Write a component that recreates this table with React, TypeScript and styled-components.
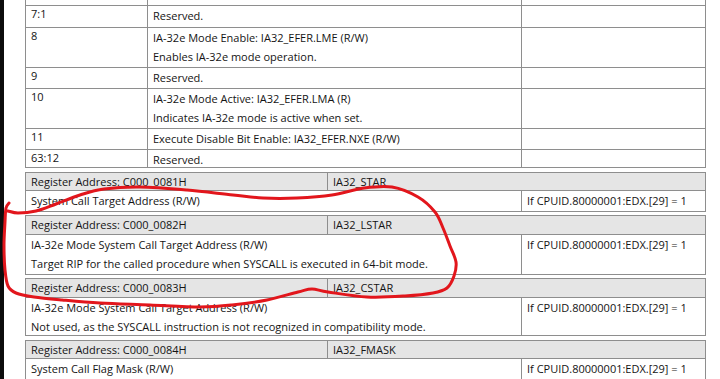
import React from "react";
import styled, { createGlobalStyle } from "styled-components";

const GlobalStyle = createGlobalStyle`
  html, body {
    margin: 0;
    padding: 0;
    background: #fff;
  }
  body {
    width: 720px;
    height: 379px;
    overflow: hidden;
    font-family: "Open Sans", "Noto Sans", sans-serif;
    font-size: 11px;
    color: #141414;
  }
`;

type BitRow = { bit: string; lines: string[]; h: number };

const bitRows: BitRow[] = [
  { bit: "", lines: [], h: 5 },
  { bit: "7:1", lines: ["Reserved."], h: 21 },
  {
    bit: "8",
    lines: ["IA-32e Mode Enable: IA32_EFER.LME (R/W)", "Enables IA-32e mode operation."],
    h: 39,
  },
  { bit: "9", lines: ["Reserved."], h: 20 },
  {
    bit: "10",
    lines: ["IA-32e Mode Active: IA32_EFER.LMA (R)", "Indicates IA-32e mode is active when set."],
    h: 39,
  },
  { bit: "11", lines: ["Execute Disable Bit Enable: IA32_EFER.NXE (R/W)"], h: 20 },
  { bit: "63:12", lines: ["Reserved."], h: 17 },
];

type Register = {
  address: string;
  name: string;
  lines: string[];
  note: string;
  mt: number;
  headH: number;
  bodyH: number;
};

const cpuid = "If CPUID.80000001:EDX.[29] = 1";

const registers: Register[] = [
  {
    address: "C000_0081H",
    name: "IA32_STAR",
    lines: ["System Call Target Address (R/W)"],
    note: cpuid,
    mt: 4,
    headH: 17,
    bodyH: 19,
  },
  {
    address: "C000_0082H",
    name: "IA32_LSTAR",
    lines: [
      "IA-32e Mode System Call Target Address (R/W)",
      "Target RIP for the called procedure when SYSCALL is executed in 64-bit mode.",
    ],
    note: cpuid,
    mt: 3,
    headH: 18,
    bodyH: 38,
  },
  {
    address: "C000_0083H",
    name: "IA32_CSTAR",
    lines: [
      "IA-32e Mode System Call Target Address (R/W)",
      "Not used, as the SYSCALL instruction is not recognized in compatibility mode.",
    ],
    note: cpuid,
    mt: 3,
    headH: 18,
    bodyH: 36,
  },
  {
    address: "C000_0084H",
    name: "IA32_FMASK",
    lines: ["System Call Flag Mask (R/W)"],
    note: cpuid,
    mt: 4,
    headH: 17,
    bodyH: 19,
  },
];

// hand-drawn red loop, points traced from the markup
const loop: [number, number][] = [
  [9, 203], [6, 208], [5, 222], [4, 245], [5, 270], [8, 286], [16, 293],
  [34, 297], [62, 300], [100, 303], [150, 305], [200, 307], [232, 305],
  [267, 300], [298, 292], [312, 289], [328, 292], [367, 297], [405, 296],
  [433, 293], [447, 288], [454, 276], [456, 262], [450, 246], [443, 228],
  [435, 212], [418, 197], [392, 187], [364, 188], [332, 195], [297, 198],
  [263, 198], [233, 195], [187, 190], [140, 187], [104, 189], [80, 195],
  [56, 204], [36, 211], [18, 213], [8, 211],
];

function smoothPath(pts: [number, number][]) {
  let d = `M${pts[0][0]},${pts[0][1]}`;
  for (let i = 0; i < pts.length - 1; i++) {
    const p0 = pts[i - 1] || pts[i];
    const p1 = pts[i];
    const p2 = pts[i + 1];
    const p3 = pts[i + 2] || p2;
    const c1x = p1[0] + (p2[0] - p0[0]) / 6;
    const c1y = p1[1] + (p2[1] - p0[1]) / 6;
    const c2x = p2[0] - (p3[0] - p1[0]) / 6;
    const c2y = p2[1] - (p3[1] - p1[1]) / 6;
    d += ` C${c1x.toFixed(1)},${c1y.toFixed(1)} ${c2x.toFixed(1)},${c2y.toFixed(1)} ${p2[0]},${p2[1]}`;
  }
  return d;
}

export default function App() {
  return (
    <>
      <GlobalStyle />
      <Page>
        <Strip />
        <Main>
          <BitsTable>
            {bitRows.map((r, i) => (
              <BitsRow key={i} $h={r.h}>
                <Cell>{r.bit}</Cell>
                <Cell $divided>
                  {r.lines.map((l) => (
                    <Line key={l}>{l}</Line>
                  ))}
                </Cell>
                <Cell $divided />
              </BitsRow>
            ))}
          </BitsTable>
          {registers.map((r) => (
            <RegBlock key={r.address} $mt={r.mt}>
              <RegHead $h={r.headH}>
                <Cell>Register Address: {r.address}</Cell>
                <Cell $divided>{r.name}</Cell>
              </RegHead>
              <RegBody $h={r.bodyH}>
                <Cell>
                  {r.lines.map((l) => (
                    <Line key={l}>{l}</Line>
                  ))}
                </Cell>
                <Cell $divided>
                  <Line>{r.note}</Line>
                </Cell>
              </RegBody>
            </RegBlock>
          ))}
          <NextBlock />
        </Main>
        <Markup viewBox="0 0 720 379" width="720" height="379">
          <path
            d={smoothPath(loop)}
            fill="none"
            stroke="#e2161c"
            strokeWidth={3}
            strokeLinecap="round"
            strokeLinejoin="round"
          />
        </Markup>
      </Page>
    </>
  );
}

const Page = styled.div`
  position: relative;
  display: flex;
  width: 720px;
  height: 379px;
  overflow: hidden;
`;

const Strip = styled.div`
  flex: 0 0 4px;
  background: #0c0c0c;
`;

const Main = styled.div`
  padding-left: 21px;
  display: flex;
  flex-direction: column;
`;

const BitsTable = styled.div`
  width: 681px;
  box-sizing: border-box;
  border-left: 1px solid #8e8e8e;
  border-right: 1px solid #8e8e8e;
`;

const BitsRow = styled.div<{ $h: number }>`
  display: grid;
  grid-template-columns: 121px 374px 1fr;
  height: ${(p) => p.$h}px;
  border-bottom: 1px solid #8e8e8e;
`;

const Cell = styled.div<{ $divided?: boolean }>`
  box-sizing: border-box;
  padding: 0 5px;
  overflow: hidden;
  white-space: nowrap;
  ${(p) => (p.$divided ? "border-left: 1px solid #8e8e8e;" : "")}
`;

const Line = styled.div`
  line-height: 19px;
`;

const RegBlock = styled.div<{ $mt: number }>`
  margin-top: ${(p) => p.$mt}px;
  width: 681px;
  box-sizing: border-box;
  border: 1px solid #8e8e8e;
  border-bottom: none;
`;

const RegHead = styled.div<{ $h: number }>`
  display: grid;
  grid-template-columns: 301px 1fr;
  height: ${(p) => p.$h}px;
  line-height: ${(p) => p.$h}px;
  background: #e5e5e5;
  border-bottom: 1px solid #8e8e8e;
`;

const RegBody = styled.div<{ $h: number }>`
  display: grid;
  grid-template-columns: 495px 1fr;
  height: ${(p) => p.$h}px;
  padding-top: 1px;
  box-sizing: content-box;
  border-bottom: 1px solid #8e8e8e;
  & > div {
    margin-top: -1px;
  }
`;

const NextBlock = styled.div`
  margin-top: 3px;
  width: 681px;
  height: 10px;
  box-sizing: border-box;
  border: 1px solid #8e8e8e;
  background: #e5e5e5;
`;

const Markup = styled.svg`
  position: absolute;
  left: 0;
  top: 0;
  pointer-events: none;
`;
